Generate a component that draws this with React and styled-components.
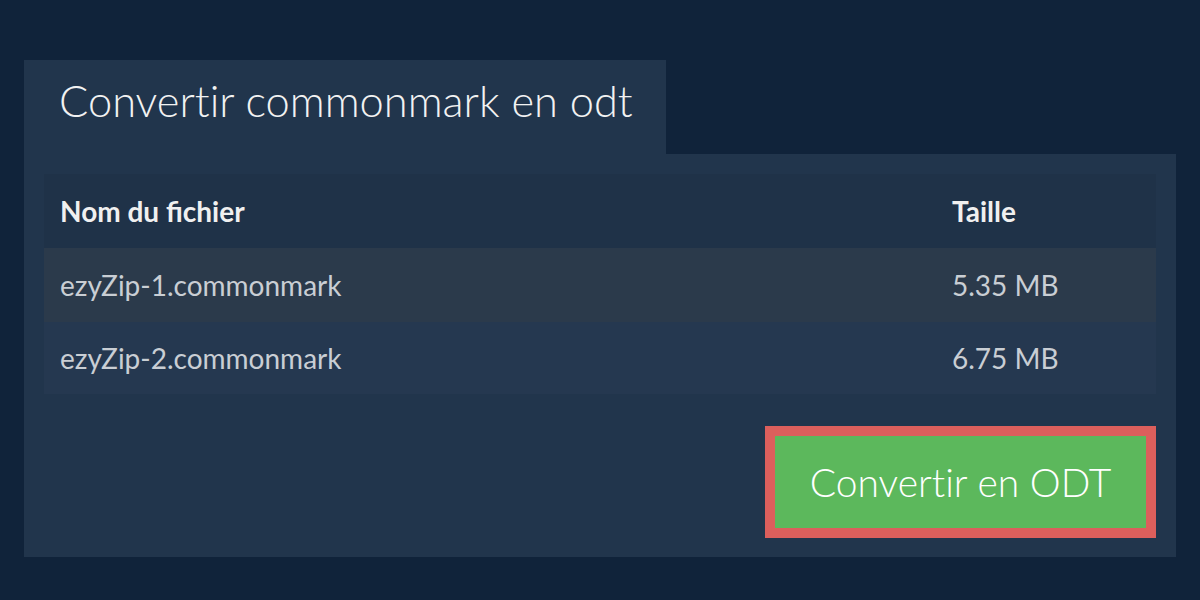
import React from 'react';
import styled, { createGlobalStyle } from 'styled-components';

const GlobalStyle = createGlobalStyle`
	html, body {
		margin: 0;
		padding: 0;
		background: #10233a;
	}
	body {
		font-family: Lato, "Open Sans", sans-serif;
	}
`;

const Page = styled.div`
	width: 1200px;
	height: 600px;
	box-sizing: border-box;
	padding: 60px 24px 0;
	background: #10233a;
`;

const Tab = styled.div`
	width: 642px;
	height: 94px;
	box-sizing: border-box;
	padding: 13px 0 0 35px;
	background: #21354c;
	color: #f2f2f2;
	font-size: 43.4px;
	font-weight: 300;
	line-height: 54px;
	font-variant-ligatures: none;
`;

const Panel = styled.div`
	background: #21354c;
	padding: 20px 20px 19px;
	display: flex;
	flex-direction: column;
`;

const Table = styled.div`
	display: flex;
	flex-direction: column;
`;

const Row = styled.div`
	display: grid;
	grid-template-columns: 1fr 204px;
	align-items: center;
	height: ${(p) => p.$h}px;
	padding-left: 16px;
	background: ${(p) => p.$bg};
	color: ${(p) => (p.$head ? '#f0f0f0' : '#c9ced4')};
	font-size: 28px;
	font-weight: ${(p) => (p.$head ? 700 : 400)};
`;

const Actions = styled.div`
	display: flex;
	justify-content: flex-end;
	margin-top: 32px;
`;

const Button = styled.button`
	width: 391px;
	height: 112px;
	box-sizing: border-box;
	border: 10px solid #dc5f5c;
	background: #5cb85c;
	color: #ffffff;
	font-family: Lato, "Open Sans", sans-serif;
	font-size: 39px;
	font-weight: 300;
	font-variant-ligatures: none;
	padding: 0;
	cursor: pointer;
`;

const files = [
	{ name: 'ezyZip-1.commonmark', size: '5.35 MB', bg: '#2b3a4b', h: 74 },
	{ name: 'ezyZip-2.commonmark', size: '6.75 MB', bg: '#253850', h: 72 },
];

const App = () => {
	return (
		<Page>
			<GlobalStyle />
			<Tab>Convertir commonmark en odt</Tab>
			<Panel>
				<Table>
					<Row $head $bg="#1f3248" $h={74}>
						<span>Nom du fichier</span>
						<span>Taille</span>
					</Row>
					{files.map((f) => (
						<Row key={f.name} $bg={f.bg} $h={f.h}>
							<span>{f.name}</span>
							<span>{f.size}</span>
						</Row>
					))}
				</Table>
				<Actions>
					<Button>Convertir en ODT</Button>
				</Actions>
			</Panel>
		</Page>
	);
};

export default App;
